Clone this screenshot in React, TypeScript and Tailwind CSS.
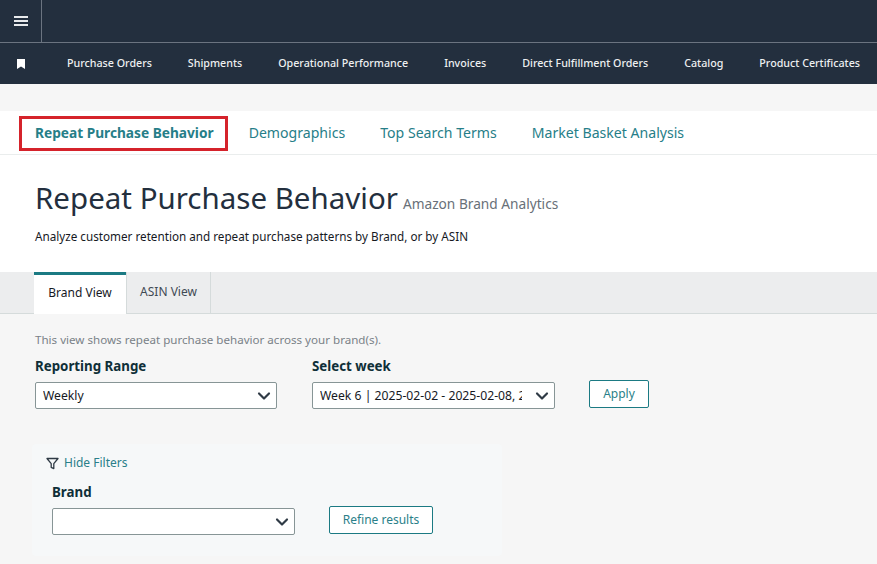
import React from 'react';
import { ChevronDown } from 'lucide-react';

const navItems = [
  'Purchase Orders',
  'Shipments',
  'Operational Performance',
  'Invoices',
  'Direct Fulfillment Orders',
  'Catalog',
  'Product Certificates',
];

const pageTabs = ['Demographics', 'Top Search Terms', 'Market Basket Analysis'];

const Select = ({ value, width }: { value: string; width: string }) => (
  <div className={`flex h-[27px] items-center rounded-[2px] border border-[#879596] bg-white pl-[7px] pr-[2px] text-[12.2px] text-[#16191f] ${width}`}>
    <span className="mr-[10px] flex-1 overflow-hidden whitespace-nowrap">{value}</span>
    <ChevronDown size={20} strokeWidth={2.6} className="shrink-0 text-[#2f3a45]" />
  </div>
);

const OutlineButton = ({ label, width }: { label: string; width: string }) => (
  <button className={`mb-[1px] flex h-[28px] items-center justify-center rounded-[2px] border border-[#1b7a83] bg-white text-[12px] text-[#2a7f89] ${width}`}>
    {label}
  </button>
);

const App: React.FC = () => {
  return (
    <div className="flex h-[564px] w-[877px] flex-col overflow-hidden bg-[#f6f6f6] font-['Noto_Sans',sans-serif] text-[#16191f]">
      {/* top bar */}
      <div className="flex h-[43px] border-b border-[#6b7480] bg-[#232f3e]">
        <div className="flex w-[42px] items-center justify-center border-r border-[#6b7480]">
          <svg width="14" height="10" viewBox="0 0 14 10" fill="#e8eaec">
            <rect y="0" width="14" height="2" />
            <rect y="4" width="14" height="2" />
            <rect y="8" width="14" height="2" />
          </svg>
        </div>
      </div>

      {/* nav */}
      <div className="flex h-[41px] items-center bg-[#232f3e] pl-[17px] text-[10.7px] font-medium text-[#eef0f1]">
        <svg width="8" height="10" viewBox="0 0 8 10" fill="#ffffff" className="mr-[42px]">
          <path d="M0 0h8v10L4 7.5 0 10z" />
        </svg>
        <div className="flex gap-[36px] whitespace-nowrap">
          {navItems.map(item => (
            <span key={item}>{item}</span>
          ))}
        </div>
      </div>

      <div className="h-[27px]" />

      {/* header */}
      <div className="h-[161px] bg-white">
        <div className="flex h-[44px] items-center border-b border-[#eaeded] pl-[19px] pt-[1px] text-[14.1px] text-[#267e88]">
          <div className="mr-[21px] flex h-[35px] items-center border-[3px] border-[#d5232b] pl-[13px] pr-[11px] text-[13.7px] font-bold">
            Repeat Purchase Behavior
          </div>
          <div className="flex gap-[35px]">
            {pageTabs.map(tab => (
              <span key={tab}>{tab}</span>
            ))}
          </div>
        </div>
        <div className="flex items-baseline gap-[5px] pl-[35px] pt-[23px]">
          <h1 className="text-[29.5px] leading-[40px] text-[#232f3e]">Repeat Purchase Behavior</h1>
          <span className="text-[13.7px] text-[#687078]">Amazon Brand Analytics</span>
        </div>
        <p className="pl-[35px] pt-[10px] text-[11.7px] text-[#16191f]">
          Analyze customer retention and repeat purchase patterns by Brand, or by ASIN
        </p>
      </div>

      {/* view tabs */}
      <div className="flex h-[42px] border-b border-[#d5dbdb] bg-[#ecedee] pl-[34px] text-[12px]">
        <div className="flex h-[42px] w-[92px] items-center justify-center border-t-[3px] border-[#1b7a83] bg-white pb-[3px] text-[#16191f]">
          Brand View
        </div>
        <div className="flex w-[85px] items-center justify-center border-x border-[#d5dbdb] pb-[1px] text-[#3f4a54]">
          ASIN View
        </div>
      </div>

      {/* content */}
      <div className="pl-[35px] pt-[17px]">
        <p className="text-[11.6px] text-[#7a8288]">This view shows repeat purchase behavior across your brand(s).</p>
        <div className="mt-[9px] flex items-end">
          <div className="w-[277px]">
            <div className="mb-[5px] text-[13.3px] font-bold text-[#0f2f38]">Reporting Range</div>
            <Select value="Weekly" width="w-[242px]" />
          </div>
          <div className="w-[277px]">
            <div className="mb-[5px] text-[13.3px] font-bold text-[#0f2f38]">Select week</div>
            <Select value="Week 6 | 2025-02-02 - 2025-02-08, 2025" width="w-[243px]" />
          </div>
          <OutlineButton label="Apply" width="w-[60px]" />
        </div>
      </div>

      {/* filters */}
      <div className="mb-[8px] ml-[32px] mt-[35px] w-[470px] flex-1 rounded-[4px] bg-[#f6f8f9] pl-[14px] pt-[10px]">
        <div className="flex items-center gap-[5px] text-[12px] text-[#2a7f89]">
          <svg width="13" height="13" viewBox="0 0 13 13" fill="none" stroke="#2f3a45" strokeWidth="1.3" strokeLinejoin="round">
            <path d="M1 1.5h11L7.8 6.6v5l-2.6-1.2V6.6z" />
          </svg>
          <span>Hide Filters</span>
        </div>
        <div className="mt-[11px] flex items-end pl-[6px]">
          <div className="w-[277px]">
            <div className="mb-[5px] text-[13.3px] font-bold text-[#0f2f38]">Brand</div>
            <Select value="" width="w-[243px]" />
          </div>
          <OutlineButton label="Refine results" width="w-[104px]" />
        </div>
      </div>
    </div>
  );
};

export default App;
